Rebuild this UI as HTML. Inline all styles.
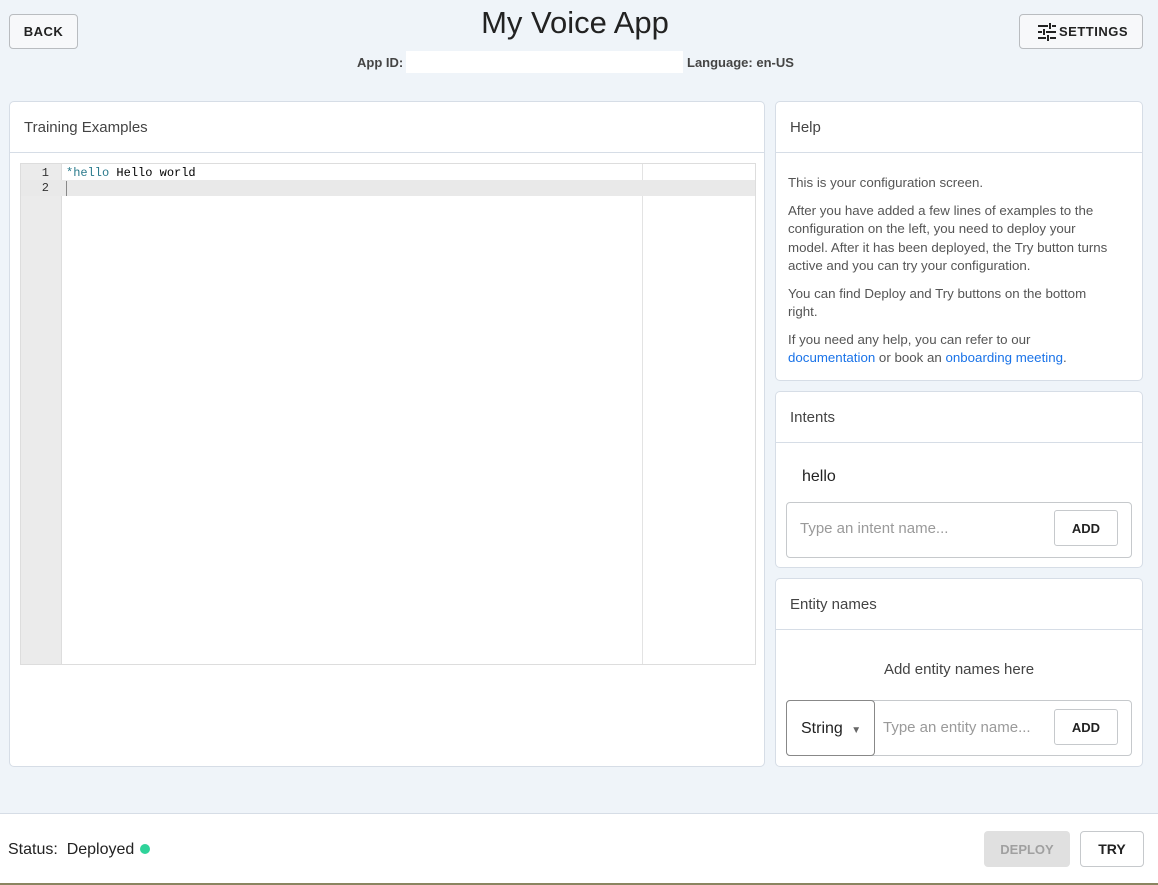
<!DOCTYPE html>
<html><head><style>
*{box-sizing:border-box;margin:0;padding:0}
body{width:1158px;height:885px;background:#eff4f9;font-family:"Liberation Sans",Roboto,sans-serif;position:relative;overflow:hidden;color:#333}
.btn{position:absolute;border:1px solid #b9bcc0;border-radius:4px;background:#f7f8fa;font-size:13px;font-weight:bold;letter-spacing:.5px;color:#222;display:flex;align-items:center;justify-content:center}
.card{position:absolute;background:#fff;border:1px solid #d6dde6;border-radius:5px}
.card h3{height:51px;border-bottom:1px solid #d6dde6;font-size:15px;font-weight:normal;color:#444;padding:17px 0 0 14px}
.help p{font-size:13.3px;color:#555;line-height:18.5px;margin:0 34px 9px 12px}
.help a{color:#1a73e8}
.inp{position:absolute;border:1px solid #c6c9cc;border-radius:4px;background:#fff}
.add{position:absolute;border:1px solid #c6c9cc;border-radius:3px;font-size:13px;font-weight:bold;display:flex;align-items:center;justify-content:center;color:#222;background:#fff}
.ph{position:absolute;font-size:15px;color:#9a9a9a}
</style></head><body>
<div class="btn" style="left:9px;top:14px;width:69px;height:35px">BACK</div>
<div style="position:absolute;left:0;width:1150px;top:5px;text-align:center;font-size:31px;color:#222;font-weight:300">My Voice App</div>
<div style="position:absolute;left:357px;top:55px;font-size:13px;font-weight:bold;color:#444">App ID:</div>
<div style="position:absolute;left:406px;top:51px;width:277px;height:22px;background:#fff"></div>
<div style="position:absolute;left:687px;top:55px;font-size:13px;font-weight:bold;color:#444">Language: en-US</div>
<div class="btn" style="left:1019px;top:14px;width:124px;height:35px;justify-content:flex-start;padding-left:17px">
<svg width="20" height="18" viewBox="0 0 20 18" style="margin-right:2px"><g stroke="#222" stroke-width="2"><path d="M1 3h10M15 3h4M13 0v6M1 9h4M9 9h10M7 6v6M1 15h8M13 15h6M11 12v6"/></g></svg>SETTINGS</div>

<div class="card" style="left:9px;top:101px;width:756px;height:666px">
<h3>Training Examples</h3>
<div style="position:absolute;left:10px;top:61px;width:736px;height:502px;border:1px solid #ddd;background:#fff;font-family:'Liberation Mono',monospace;font-size:12px">
<div style="position:absolute;left:0;top:0;width:41px;height:100%;background:#ebebeb;border-right:1px solid #ddd"></div>
<div style="position:absolute;left:621px;top:0;width:1px;height:100%;background:#e3e3e3"></div>
<div style="position:absolute;left:0;top:16px;width:100%;height:16px;background:#e9e9e9"></div>
<div style="position:absolute;left:0;top:2px;width:28px;text-align:right;color:#333">1</div>
<div style="position:absolute;left:0;top:17px;width:28px;text-align:right;color:#333">2</div>
<div style="position:absolute;left:45px;top:2px;color:#000"><span style="color:#2a7a8c">*hello</span> Hello world</div>
<div style="position:absolute;left:45px;top:17px;width:1px;height:15px;background:#888"></div>
</div>
</div>

<div class="card help" style="left:775px;top:101px;width:368px;height:280px">
<h3>Help</h3>
<div style="padding-top:21px">
<p>This is your configuration screen.</p>
<p>After you have added a few lines of examples to the configuration on the left, you need to deploy your model. After it has been deployed, the Try button turns active and you can try your configuration.</p>
<p>You can find Deploy and Try buttons on the bottom right.</p>
<p>If you need any help, you can refer to our <a>documentation</a> or book an <a>onboarding meeting</a>.</p>
</div></div>

<div class="card" style="left:775px;top:391px;width:368px;height:177px">
<h3>Intents</h3>
<div style="position:absolute;left:26px;top:76px;font-size:16px;color:#222">hello</div>
<div class="inp" style="left:10px;top:110px;width:346px;height:56px"></div>
<div class="ph" style="left:24px;top:128px">Type an intent name...</div>
<div class="add" style="left:278px;top:118px;width:64px;height:36px">ADD</div>
</div>

<div class="card" style="left:775px;top:578px;width:368px;height:189px">
<h3>Entity names</h3>
<div style="position:absolute;left:0;width:100%;top:82px;text-align:center;font-size:15px;color:#444">Add entity names here</div>
<div class="inp" style="left:10px;top:121px;width:346px;height:56px"></div>
<div class="inp" style="left:10px;top:121px;width:89px;height:56px;border-color:#888;font-size:16px;color:#222;padding:19px 0 0 14px">String <span style="font-size:10px;color:#666;margin-left:4px">▼</span></div>
<div class="ph" style="left:107px;top:140px">Type an entity name...</div>
<div class="add" style="left:278px;top:130px;width:64px;height:36px">ADD</div>
</div>

<div style="position:absolute;left:0;top:813px;width:1158px;height:72px;background:#fff;border-top:1px solid #d6dde6"></div>
<div style="position:absolute;left:8px;top:841px;font-size:16px;color:#222">Status:&nbsp; Deployed</div>
<div style="position:absolute;left:140px;top:844px;width:10px;height:10px;border-radius:50%;background:#2fd39a"></div>
<div style="position:absolute;left:984px;top:831px;width:86px;height:36px;background:#e0e0e0;border-radius:4px;color:#a0a0a0;font-size:13px;font-weight:bold;display:flex;align-items:center;justify-content:center">DEPLOY</div>
<div class="add" style="left:1080px;top:831px;width:64px;height:36px;border-radius:4px;font-size:14px">TRY</div>
<div style="position:absolute;left:0;top:883px;width:1158px;height:2px;background:#8a8560"></div>
</body></html>
